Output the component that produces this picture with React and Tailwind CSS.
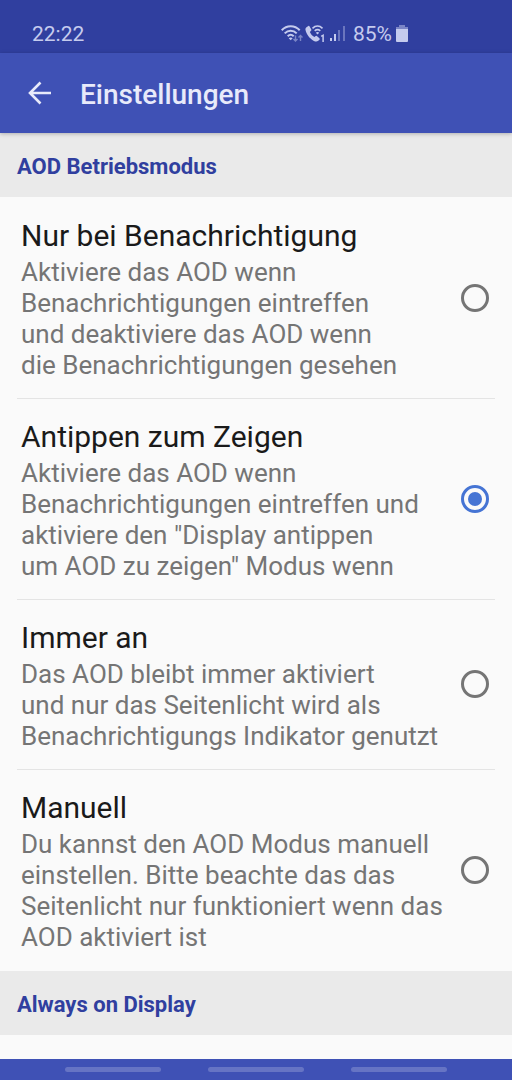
import { useState } from 'react';

const MODES = [
  {
    key: 'notification',
    title: 'Nur bei Benachrichtigung',
    text: 'Aktiviere das AOD wenn\nBenachrichtigungen eintreffen\nund deaktiviere das AOD wenn\ndie Benachrichtigungen gesehen',
  },
  {
    key: 'tap',
    title: 'Antippen zum Zeigen',
    text: 'Aktiviere das AOD wenn\nBenachrichtigungen eintreffen und\naktiviere den "Display antippen\num AOD zu zeigen" Modus wenn',
  },
  {
    key: 'always',
    title: 'Immer an',
    text: 'Das AOD bleibt immer aktiviert\nund nur das Seitenlicht wird als\nBenachrichtigungs Indikator genutzt',
  },
  {
    key: 'manual',
    title: 'Manuell',
    text: 'Du kannst den AOD Modus manuell\neinstellen. Bitte beachte das das\nSeitenlicht nur funktioniert wenn das\nAOD aktiviert ist',
  },
];

const NAV_KEYS = ['Letzte Apps', 'Startseite', 'Zurück'];

function WifiIcon() {
  return (
    <svg className="h-5 w-6" viewBox="0 0 24 20" fill="none" stroke="currentColor" strokeWidth="2" aria-hidden>
      <path d="M.7 6.200C5.700.9 13.700.9 18.700 6.200" />
      <path d="M3.700 9.400c3.400-3.600 8.600-3.600 12 0" />
      <path d="M6.700 12.300c1.800-1.800 4.200-1.800 6 0" />
      <path d="M7.700 14.200q2-1.500 4 0L9.700 16.200z" fill="currentColor" stroke="none" />
      <g opacity=".5" strokeWidth="1.400">
        <path d="M14.500 11.500v5.500M12.500 15l2 2 2-2" />
        <path d="M19.500 17v-5.500M17.500 13.500l2-2 2 2" />
      </g>
    </svg>
  );
}

function WifiCallIcon() {
  return (
    <svg className="h-5 w-5" viewBox="0 0 20 20" fill="none" stroke="currentColor" strokeWidth="1.600" aria-hidden>
      <path
        d="M1.200 3.400 3.300 2q.8-.4 1.300.4l1.700 3q.4.800-.3 1.400L4.900 7.900c.9 2.200 2.400 3.900 4.500 5.100l1.300-.9q.8-.5 1.400.1l2.300 2.100q.7.700.1 1.400l-1.600 1.400c-1.100.8-2.600.5-4.400-.4C4.500 14.500 1.300 10.300.5 6.100.3 4.900.5 4 1.200 3.400z"
        fill="currentColor"
        stroke="none"
      />
      <path d="M7.500 4.300c3-2.900 7-2.900 10 0" />
      <path d="M9.700 6.900c1.800-1.600 3.800-1.600 5.600 0" />
      <path d="M10.800 8.700q1.700-1.300 3.400 0l-1.700 1.900z" fill="currentColor" stroke="none" />
      <path d="M16.200 12.300l1.900-1.100V18" strokeWidth="1.500" />
    </svg>
  );
}

function SignalIcon() {
  return (
    <svg className="h-5 w-4" viewBox="0 0 16 20" fill="currentColor" aria-hidden>
      <rect x="1" y="14" width="2" height="3" />
      <rect x="5" y="10" width="2" height="7" />
      <rect x="9" y="6" width="2" height="11" opacity=".4" />
      <rect x="14" y="2" width="2" height="15" opacity=".4" />
    </svg>
  );
}

function BatteryIcon() {
  return (
    <svg className="h-5 w-3" viewBox="0 0 12 20" fill="currentColor" aria-hidden>
      <path d="M3 1h6v2h3v3H0V3h3z" opacity=".5" />
      <path d="M0 5h12v12q0 1-1 1H1q-1 0-1-1z" />
    </svg>
  );
}

function SectionHeader({ children }) {
  return (
    <h2 className="flex h-16 items-center bg-[#eaeaea] px-[17px] pt-[3px] text-[22px] leading-7 font-bold text-[#303f9f]">
      {children}
    </h2>
  );
}

function ModeRow({ mode, checked, onSelect }) {
  return (
    <label className="mx-[17px] flex cursor-pointer items-center justify-between border-b border-[#e4e4e4] pt-4 pr-[6px] pb-[17px] pl-1 last:border-transparent">
      <span className="block min-w-0">
        <span className="block text-[30px] leading-[43px] text-[#1a1a1a]">{mode.title}</span>
        <span className="block text-[26px] leading-[31px] whitespace-pre-line text-[#757575]">{mode.text}</span>
      </span>
      <input
        type="radio"
        name="aod-mode"
        aria-label={mode.title}
        checked={checked}
        onChange={() => onSelect(mode.key)}
        className="grid size-7 shrink-0 appearance-none place-items-center rounded-full border-3 border-[#757575] before:size-3.5 before:rounded-full checked:border-[#4574d4] checked:before:bg-[#4574d4]"
      />
    </label>
  );
}

export default function App() {
  const [mode, setMode] = useState('tap');

  return (
    <div className="flex min-h-screen flex-col bg-[#fafafa] font-['Roboto',sans-serif]">
      <div className="flex h-[53px] items-center justify-between bg-[#303f9f] pt-[14px] pr-[104px] pl-8 text-[21px] leading-6 text-[#c5cbee]">
        <span>22:22</span>
        <div className="flex items-center">
          <WifiIcon />
          <WifiCallIcon />
          <span className="ml-1">
            <SignalIcon />
          </span>
          <span className="mr-1 ml-2">85%</span>
          <BatteryIcon />
        </div>
      </div>

      <header className="z-10 flex h-20 items-center gap-7 bg-[#3f51b5] pl-7 text-[#e8eafa] shadow-[0_1px_4px_rgba(0,0,0,0.25)]">
        <button type="button" aria-label="Zurück">
          <svg className="size-6" viewBox="0 0 24 24" fill="none" stroke="currentColor" strokeWidth="2.600" aria-hidden>
            <path d="M23 12H3M12.500 1.500 2 12l10.500 10.500" />
          </svg>
        </button>
        <h1 className="pt-[3px] text-[28px] leading-9 font-medium">Einstellungen</h1>
      </header>

      <main className="flex-1">
        <SectionHeader>AOD Betriebsmodus</SectionHeader>
        <div role="radiogroup" aria-label="AOD Betriebsmodus" className="pt-px">
          {MODES.map((item) => (
            <ModeRow key={item.key} mode={item} checked={mode === item.key} onSelect={setMode} />
          ))}
        </div>
        <SectionHeader>Always on Display</SectionHeader>
      </main>

      <nav className="flex h-[21px] items-center justify-center gap-[47px] bg-[#3f51b5]">
        {NAV_KEYS.map((label) => (
          <button key={label} type="button" aria-label={label} className="h-[5px] w-24 rounded-full bg-[#6674c4]" />
        ))}
      </nav>
    </div>
  );
}
